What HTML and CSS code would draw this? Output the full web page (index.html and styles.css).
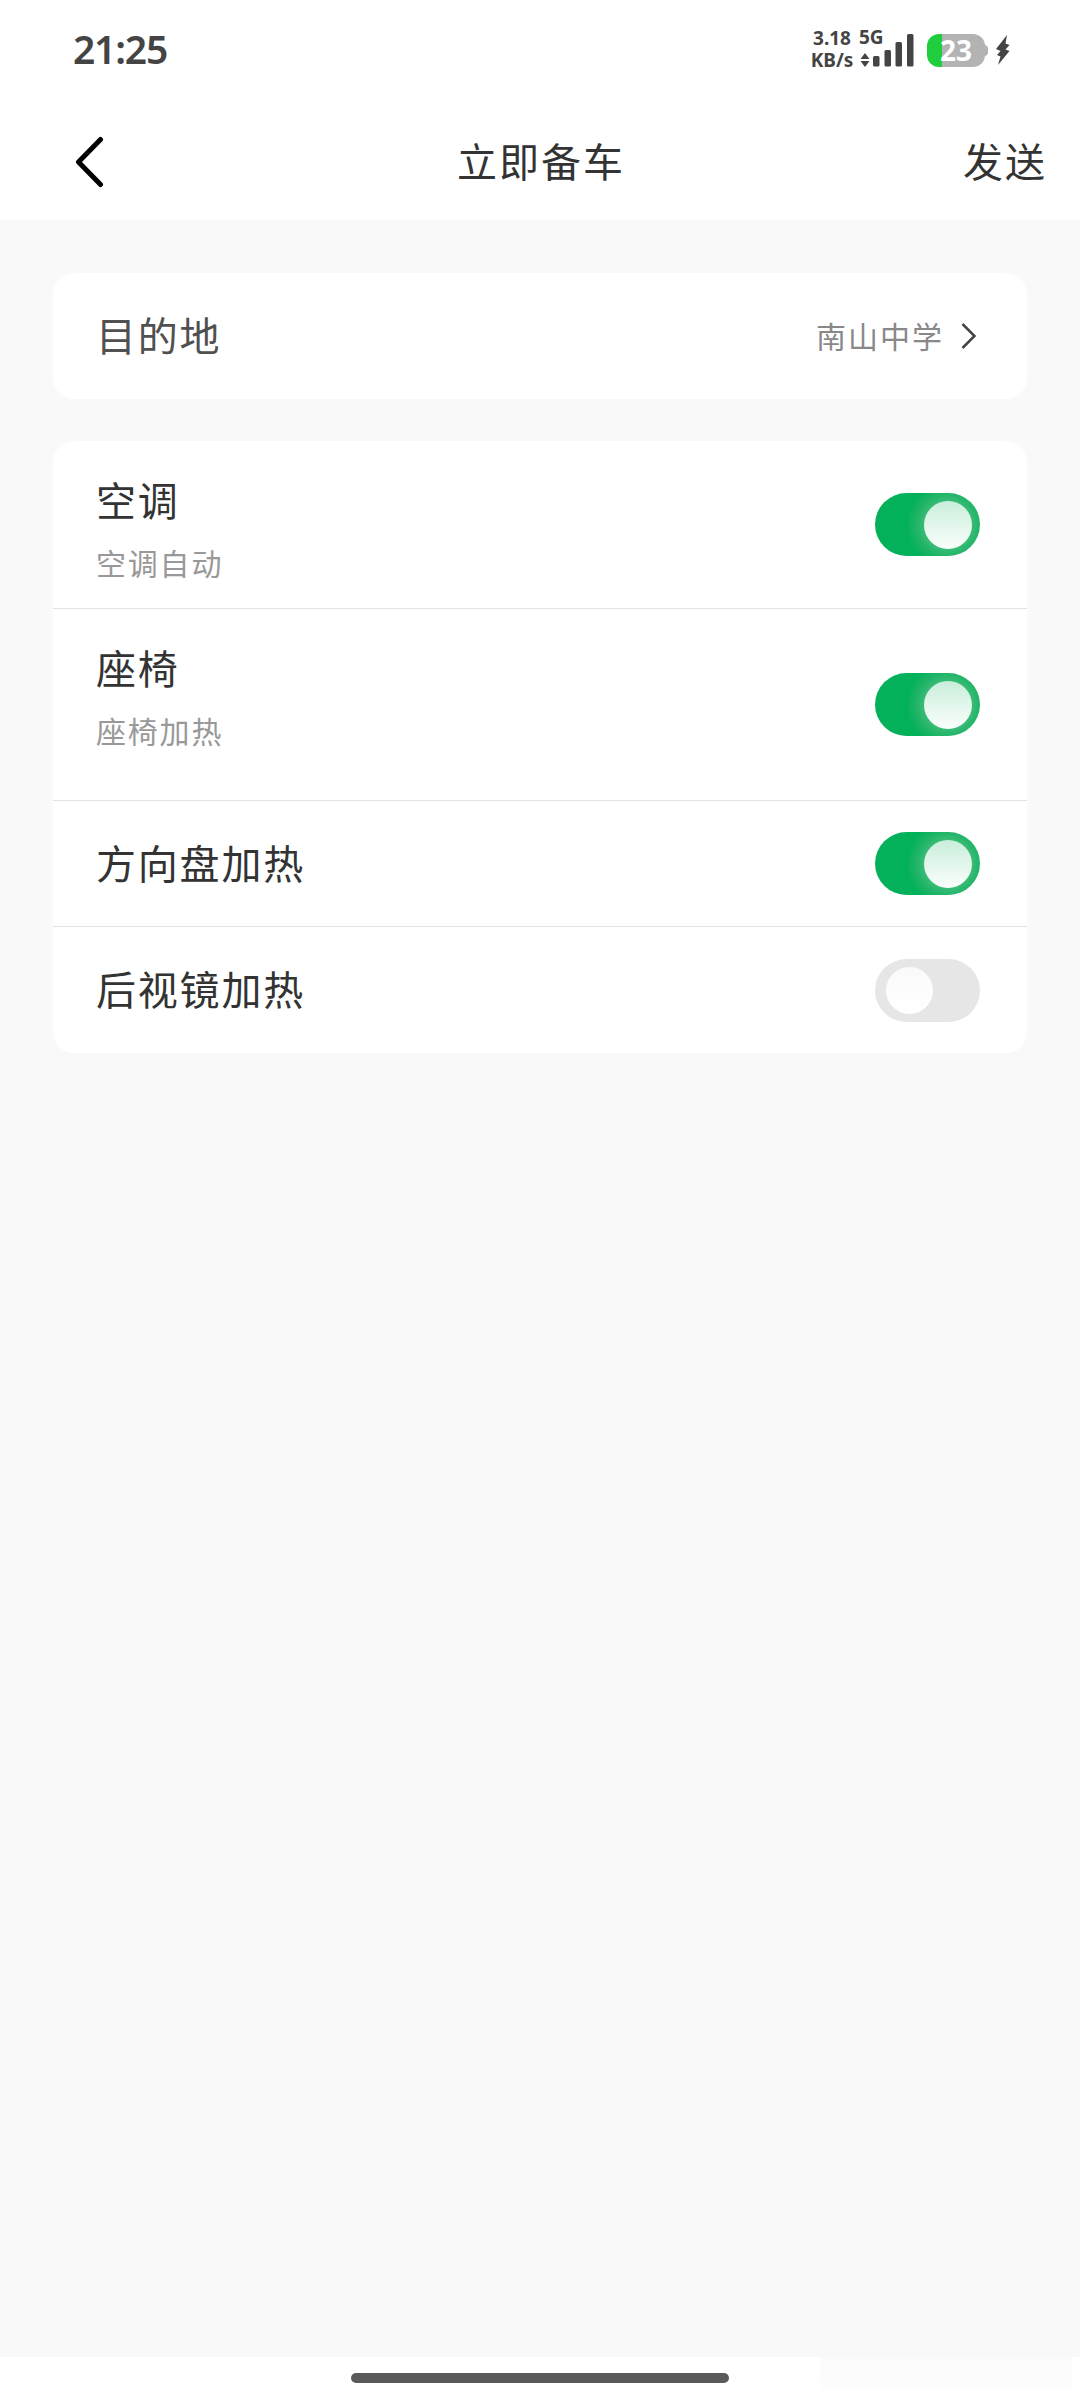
FILE: index.html
```html
<!DOCTYPE html>
<html lang="zh-CN">
<head>
  <meta charset="UTF-8" />
  <meta name="viewport" content="width=device-width, initial-scale=1.0" />
  <title>立即备车</title>
  <link rel="stylesheet" href="styles.css">
</head>
<body>

  <div class="statusbar">
    <span class="clock">21:25</span>
    <div class="indicators">
      <div class="speed">
        <span>3.18</span>
        <span>KB/s</span>
      </div>
      <div class="signal">
        <span class="network">5G</span>
        <svg width="56" height="34" viewBox="0 0 56 34" fill="#444">
          <path d="M5 20l4.500 6h-9zM5 34l4.500-6h-9z"/>
          <rect x="13" y="23" width="6.500" height="10.500" rx="1.500"/>
          <rect x="24.500" y="17" width="6.500" height="16.500" rx="1.500"/>
          <rect x="35.500" y="9" width="6.500" height="24.500" rx="1.500"/>
          <rect x="47" y="1" width="6.500" height="32.500" rx="1.500"/>
        </svg>
      </div>
      <div class="battery"><span>23</span></div>
      <svg class="bolt" width="16" height="32" viewBox="0 0 16 32" fill="#444">
        <path d="M12 1L1 15l4.500 2L2 21l3.500 1.500L3 31l11.500-14-4-1.500L14.500 11l-4-1.500z"/>
      </svg>
    </div>
  </div>

  <header class="navbar">
    <svg class="back" width="30" height="54" viewBox="0 0 30 54">
      <path d="M26.500 4.500L4.500 27l22 22.500" fill="none" stroke="#000" stroke-width="5" stroke-linecap="round" stroke-linejoin="round"/>
    </svg>
    <h1>立即备车</h1>
    <span class="send">发送</span>
  </header>

  <main>
    <section class="card">
      <div class="row">
        <span class="label muted">目的地</span>
        <div class="value">
          <span>南山中学</span>
          <svg width="16" height="28" viewBox="0 0 16 28">
            <path d="M1.500 2L13.500 14l-12 12" fill="none" stroke="#444" stroke-width="2.500"/>
          </svg>
        </div>
      </div>
    </section>

    <section class="card">
      <div class="row aircon">
        <div class="text">
          <span class="label">空调</span>
          <span class="sub">空调自动</span>
        </div>
        <div class="toggle on"></div>
      </div>
      <div class="row seat">
        <div class="text">
          <span class="label">座椅</span>
          <span class="sub">座椅加热</span>
        </div>
        <div class="toggle on"></div>
      </div>
      <div class="row">
        <span class="label">方向盘加热</span>
        <div class="toggle on"></div>
      </div>
      <div class="row mirror">
        <span class="label">后视镜加热</span>
        <div class="toggle"></div>
      </div>
    </section>
  </main>

  <footer class="homebar">
    <div class="handle"></div>
  </footer>

</body>
</html>
```
FILE: styles.css
```css
* {
  box-sizing: border-box;
}

body {
  display: flex;
  flex-direction: column;
  height: 2400px;
  margin: 0;
  background-color: #f9f9f9;
  color: #333;
  font-family: "Noto Sans CJK SC", sans-serif;
}

svg {
  display: block;
  flex-shrink: 0;
}

.statusbar {
  display: flex;
  justify-content: space-between;
  align-items: center;
  height: 100px;
  padding: 0 69px 0 73px;
  background-color: #fff;
  color: #444;
  font-family: "Noto Sans", "Open Sans", sans-serif;
  font-weight: 600;
}

.clock {
  padding-bottom: 3px;
  font-size: 39px;
  letter-spacing: -1.2px;
}

.indicators {
  display: flex;
  align-items: center;
}

.speed {
  display: flex;
  flex-direction: column;
  align-items: center;
  width: 44px;
  margin-right: 6px;
  padding-bottom: 2px;
  font-size: 19px;
  line-height: 22px;
  font-weight: 700;
}

.signal {
  position: relative;
  width: 56px;
  margin-right: 11px;
}

.network {
  position: absolute;
  top: -7px;
  left: -1px;
  font-size: 19px;
  line-height: 22px;
  font-weight: 700;
}

.battery {
  position: relative;
  width: 58px;
  height: 33px;
  margin-right: 10px;
  border-radius: 12px;
  background: linear-gradient(to right, #20cd3c 15px, #b3b3b3 15px);
  color: #fff;
  font-size: 28px;
  line-height: 32px;
  font-weight: 700;
  text-align: center;
}

.battery::after {
  content: "";
  position: absolute;
  top: 11px;
  right: -3px;
  width: 4px;
  height: 11px;
  border-radius: 0 4px 4px 0;
  background-color: #b3b3b3;
}

.navbar {
  display: grid;
  grid-template-columns: 1fr auto 1fr;
  align-items: center;
  height: 120px;
  padding: 0 33px 0 74px;
  background-color: #fff;
}

.navbar h1 {
  margin: 0 0 0 -39px;
  font-size: 40px;
  line-height: 60px;
  font-weight: 400;
  letter-spacing: 2px;
}

.back {
  margin-top: 4px;
}

.send {
  justify-self: end;
  font-size: 40px;
  line-height: 60px;
  letter-spacing: 2px;
}

main {
  flex: 1;
  padding: 53px 53px 0;
}

.card {
  margin-bottom: 42px;
  border-radius: 21px;
  background-color: #fff;
}

.row {
  display: flex;
  justify-content: space-between;
  align-items: center;
  height: 126px;
  padding: 0 47px 0 43px;
}

.row + .row {
  border-top: 1px solid #e2e2e2;
}

.row > .label {
  padding-bottom: 4px;
}

.aircon {
  height: 167px;
}

.seat {
  height: 192px;
}

.mirror {
  height: 127px;
}

.text {
  display: flex;
  flex-direction: column;
  align-self: flex-start;
  gap: 11px;
  padding-top: 28px;
}

.label {
  font-size: 40px;
  line-height: 60px;
  letter-spacing: 1.8px;
}

.muted {
  color: #505050;
}

.sub {
  color: #999;
  font-size: 30px;
  line-height: 44px;
  letter-spacing: 1.8px;
}

.value {
  display: flex;
  align-items: center;
  gap: 17px;
  padding-right: 3px;
  color: #888;
  font-size: 30px;
  letter-spacing: 2px;
}

.value span {
  padding-bottom: 3px;
}

.toggle {
  display: flex;
  align-items: center;
  width: 105px;
  height: 63px;
  padding: 0 8px 0 11px;
  border-radius: 32px;
  background-color: #e6e6e6;
}

.toggle::before {
  content: "";
  width: 47px;
  height: 47px;
  border-radius: 50%;
  background: linear-gradient(#fafafa, #fff);
}

.toggle.on {
  justify-content: flex-end;
  background: radial-gradient(circle at 73px 32px, #40bd7a 22px, #1fb467 32px, #02b159 42px);
}

.toggle.on::before {
  width: 48px;
  height: 48px;
  background: linear-gradient(#c9eedb, #fbfefc);
}

.homebar {
  display: flex;
  justify-content: center;
  height: 43px;
  padding-top: 16px;
  background: linear-gradient(#fbfbfb, #fdfdfd) 820px 0 / 252px 33px no-repeat #fff;
}

.handle {
  width: 378px;
  height: 10px;
  border-radius: 5px;
  background-color: #5a5a5a;
}
```
